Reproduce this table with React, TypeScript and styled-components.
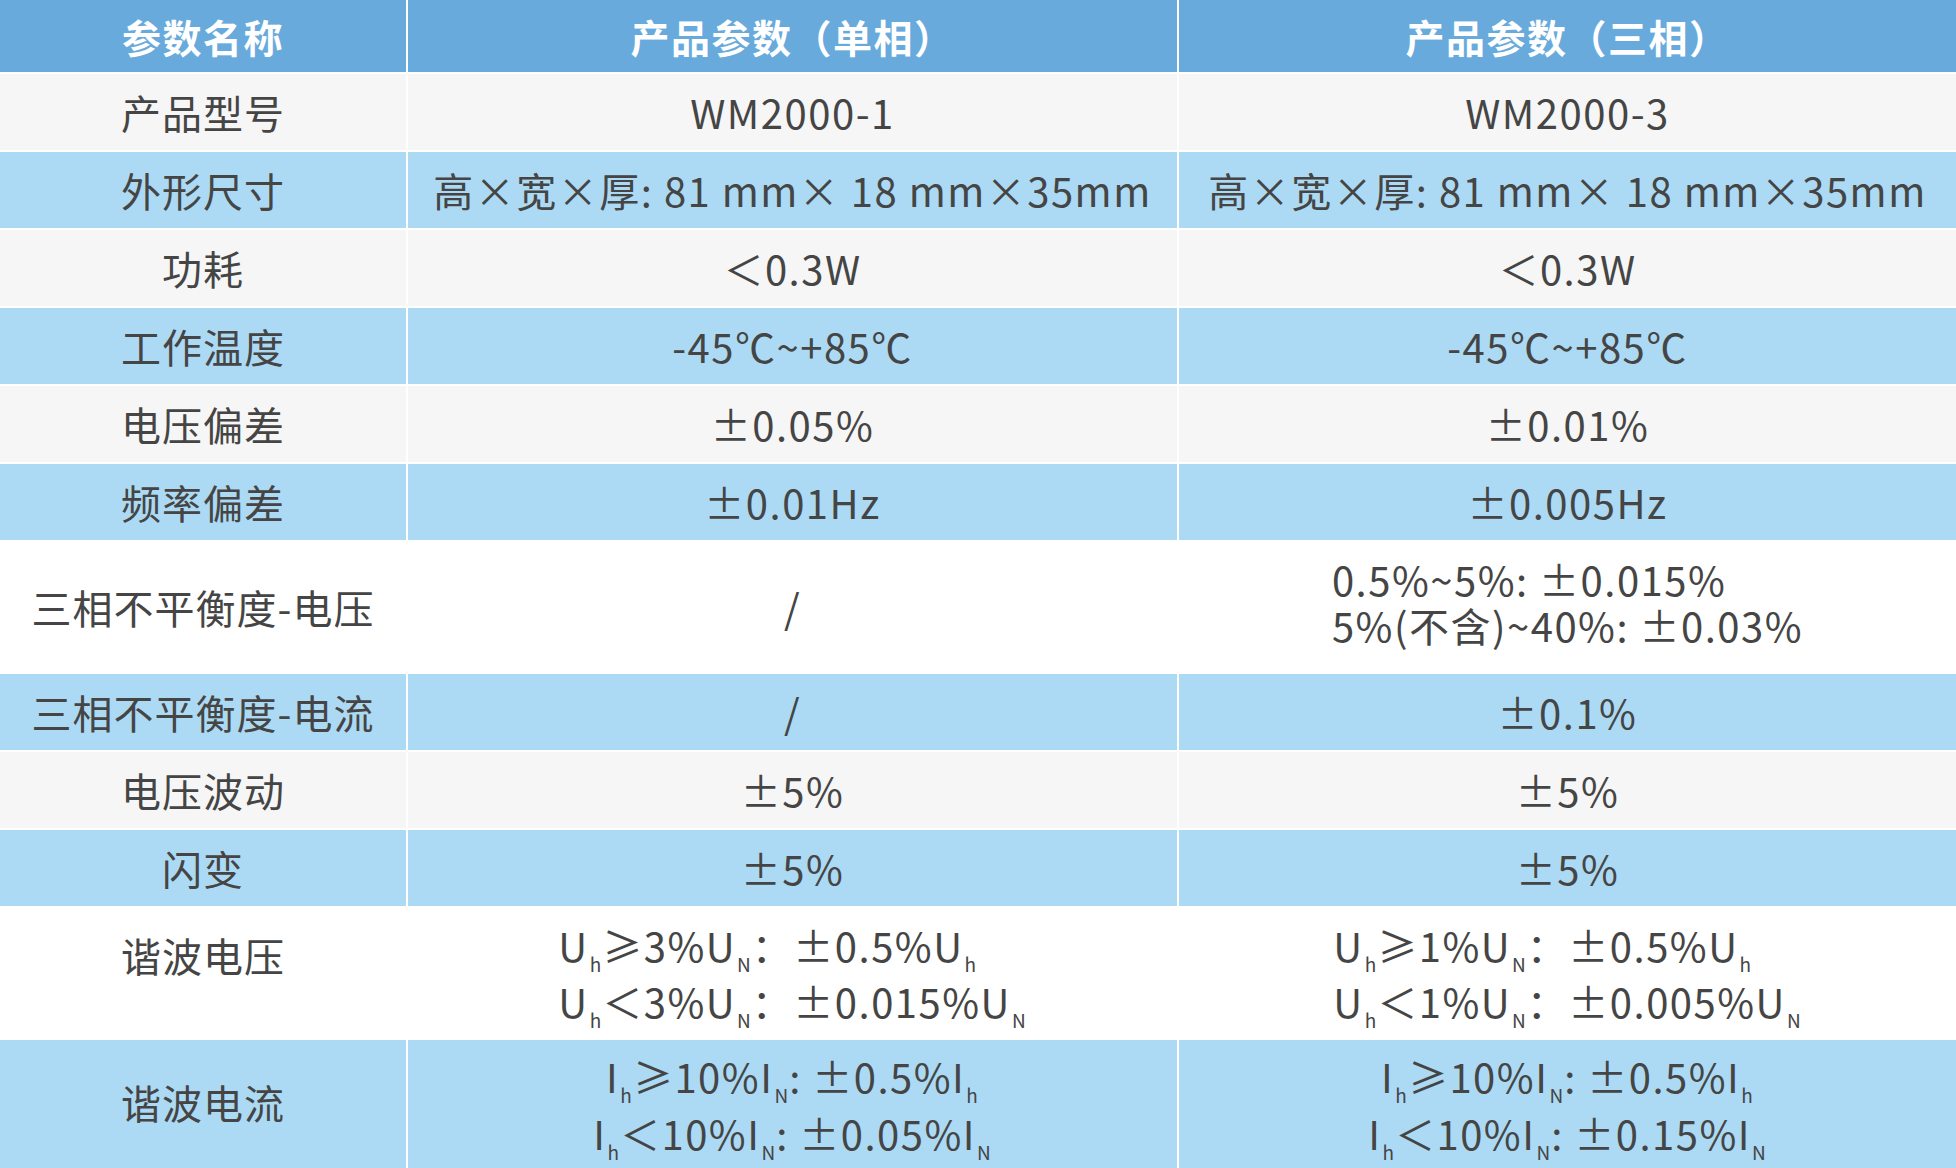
import React from 'react'
import styled, { createGlobalStyle } from 'styled-components'

type Tone = 'gray' | 'blue' | 'white'

type Row = {
  label: string
  single: React.ReactNode
  three: React.ReactNode
  tone: Tone
  tall?: boolean
  lift?: number
}

const GlobalStyle = createGlobalStyle`
  html, body {
    margin: 0;
    padding: 0;
    background: #ffffff;
  }
  body {
    font-family: "Noto Sans CJK SC", "Noto Sans", sans-serif;
  }
`

const tones: Record<Tone, string> = {
  gray: '#f6f6f6',
  blue: '#acdaf4',
  white: '#ffffff',
}

const Table = styled.div`
  display: grid;
  grid-template-columns: 406px 769px 1fr;
  gap: 2px;
  width: 1956px;
  background: #ffffff;
`

const HeadCell = styled.div`
  height: 72px;
  display: flex;
  align-items: center;
  justify-content: center;
  background: #68aadc;
  color: #ffffff;
  font-size: 39px;
  font-weight: 700;
  letter-spacing: 1.5px;
`

const Cell = styled.div<{ $tone: Tone; $tall?: boolean }>`
  height: ${(p) => (p.$tall ? '130px' : '76px')};
  display: flex;
  align-items: center;
  justify-content: center;
  background: ${(p) => tones[p.$tone]};
  color: #454545;
  font-size: 40px;
  letter-spacing: 1.5px;
  white-space: nowrap;
`

const Label = styled.span<{ $lift?: number }>`
  letter-spacing: 1px;
  margin-bottom: ${(p) => (p.$lift ? p.$lift * 2 : 0)}px;
`

const Lines = styled.div<{ $align: 'left' | 'center'; $gap: number; $lift?: number }>`
  display: inline-flex;
  flex-direction: column;
  align-items: ${(p) => (p.$align === 'left' ? 'flex-start' : 'center')};
  line-height: ${(p) => p.$gap}px;
  margin-bottom: ${(p) => (p.$lift ? p.$lift * 2 : 0)}px;
`

const Sub = styled.sub`
  font-size: 19px;
  line-height: 0;
  vertical-align: -10px;
  margin: 0 1px 0 1px;
  letter-spacing: 0;
`

const U = ({ s }: { s: string }) => (
  <>
    U<Sub>{s}</Sub>
  </>
)

const I = ({ s }: { s: string }) => (
  <>
    I<Sub>{s}</Sub>
  </>
)

const rows: Row[] = [
  { label: '产品型号', single: 'WM2000-1', three: 'WM2000-3', tone: 'gray' },
  {
    label: '外形尺寸',
    single: '高×宽×厚: 81 mm× 18 mm×35mm',
    three: '高×宽×厚: 81 mm× 18 mm×35mm',
    tone: 'blue',
  },
  { label: '功耗', single: '＜0.3W', three: '＜0.3W', tone: 'gray' },
  { label: '工作温度', single: '-45℃~+85℃', three: '-45℃~+85℃', tone: 'blue' },
  { label: '电压偏差', single: '±0.05%', three: '±0.01%', tone: 'gray' },
  { label: '频率偏差', single: '±0.01Hz', three: '±0.005Hz', tone: 'blue' },
  {
    label: '三相不平衡度-电压',
    single: '/',
    three: (
      <Lines $align="left" $gap={46} $lift={5}>
        <span>0.5%~5%: ±0.015%</span>
        <span>5%(不含)~40%: ±0.03%</span>
      </Lines>
    ),
    tone: 'white',
    tall: true,
  },
  { label: '三相不平衡度-电流', single: '/', three: '±0.1%', tone: 'blue' },
  { label: '电压波动', single: '±5%', three: '±5%', tone: 'gray' },
  { label: '闪变', single: '±5%', three: '±5%', tone: 'blue' },
  {
    label: '谐波电压',
    single: (
      <Lines $align="left" $gap={56}>
        <span>
          <U s="h" />≥3%<U s="N" />：±0.5%<U s="h" />
        </span>
        <span>
          <U s="h" />＜3%<U s="N" />：±0.015%<U s="N" />
        </span>
      </Lines>
    ),
    three: (
      <Lines $align="left" $gap={56}>
        <span>
          <U s="h" />≥1%<U s="N" />：±0.5%<U s="h" />
        </span>
        <span>
          <U s="h" />＜1%<U s="N" />：±0.005%<U s="N" />
        </span>
      </Lines>
    ),
    tone: 'white',
    tall: true,
    lift: 18,
  },
  {
    label: '谐波电流',
    single: (
      <Lines $align="center" $gap={57}>
        <span>
          <I s="h" />≥10%<I s="N" />: ±0.5%<I s="h" />
        </span>
        <span>
          <I s="h" />＜10%<I s="N" />: ±0.05%<I s="N" />
        </span>
      </Lines>
    ),
    three: (
      <Lines $align="center" $gap={57}>
        <span>
          <I s="h" />≥10%<I s="N" />: ±0.5%<I s="h" />
        </span>
        <span>
          <I s="h" />＜10%<I s="N" />: ±0.15%<I s="N" />
        </span>
      </Lines>
    ),
    tone: 'blue',
    tall: true,
    lift: 3,
  },
]

export default function App() {
  return (
    <>
      <GlobalStyle />
      <Table>
        <HeadCell>参数名称</HeadCell>
        <HeadCell>产品参数（单相）</HeadCell>
        <HeadCell>产品参数（三相）</HeadCell>
        {rows.map((r) => (
          <React.Fragment key={r.label}>
            <Cell $tone={r.tone} $tall={r.tall}>
              <Label $lift={r.lift}>{r.label}</Label>
            </Cell>
            <Cell $tone={r.tone} $tall={r.tall}>
              {r.single}
            </Cell>
            <Cell $tone={r.tone} $tall={r.tall}>
              {r.three}
            </Cell>
          </React.Fragment>
        ))}
      </Table>
    </>
  )
}
